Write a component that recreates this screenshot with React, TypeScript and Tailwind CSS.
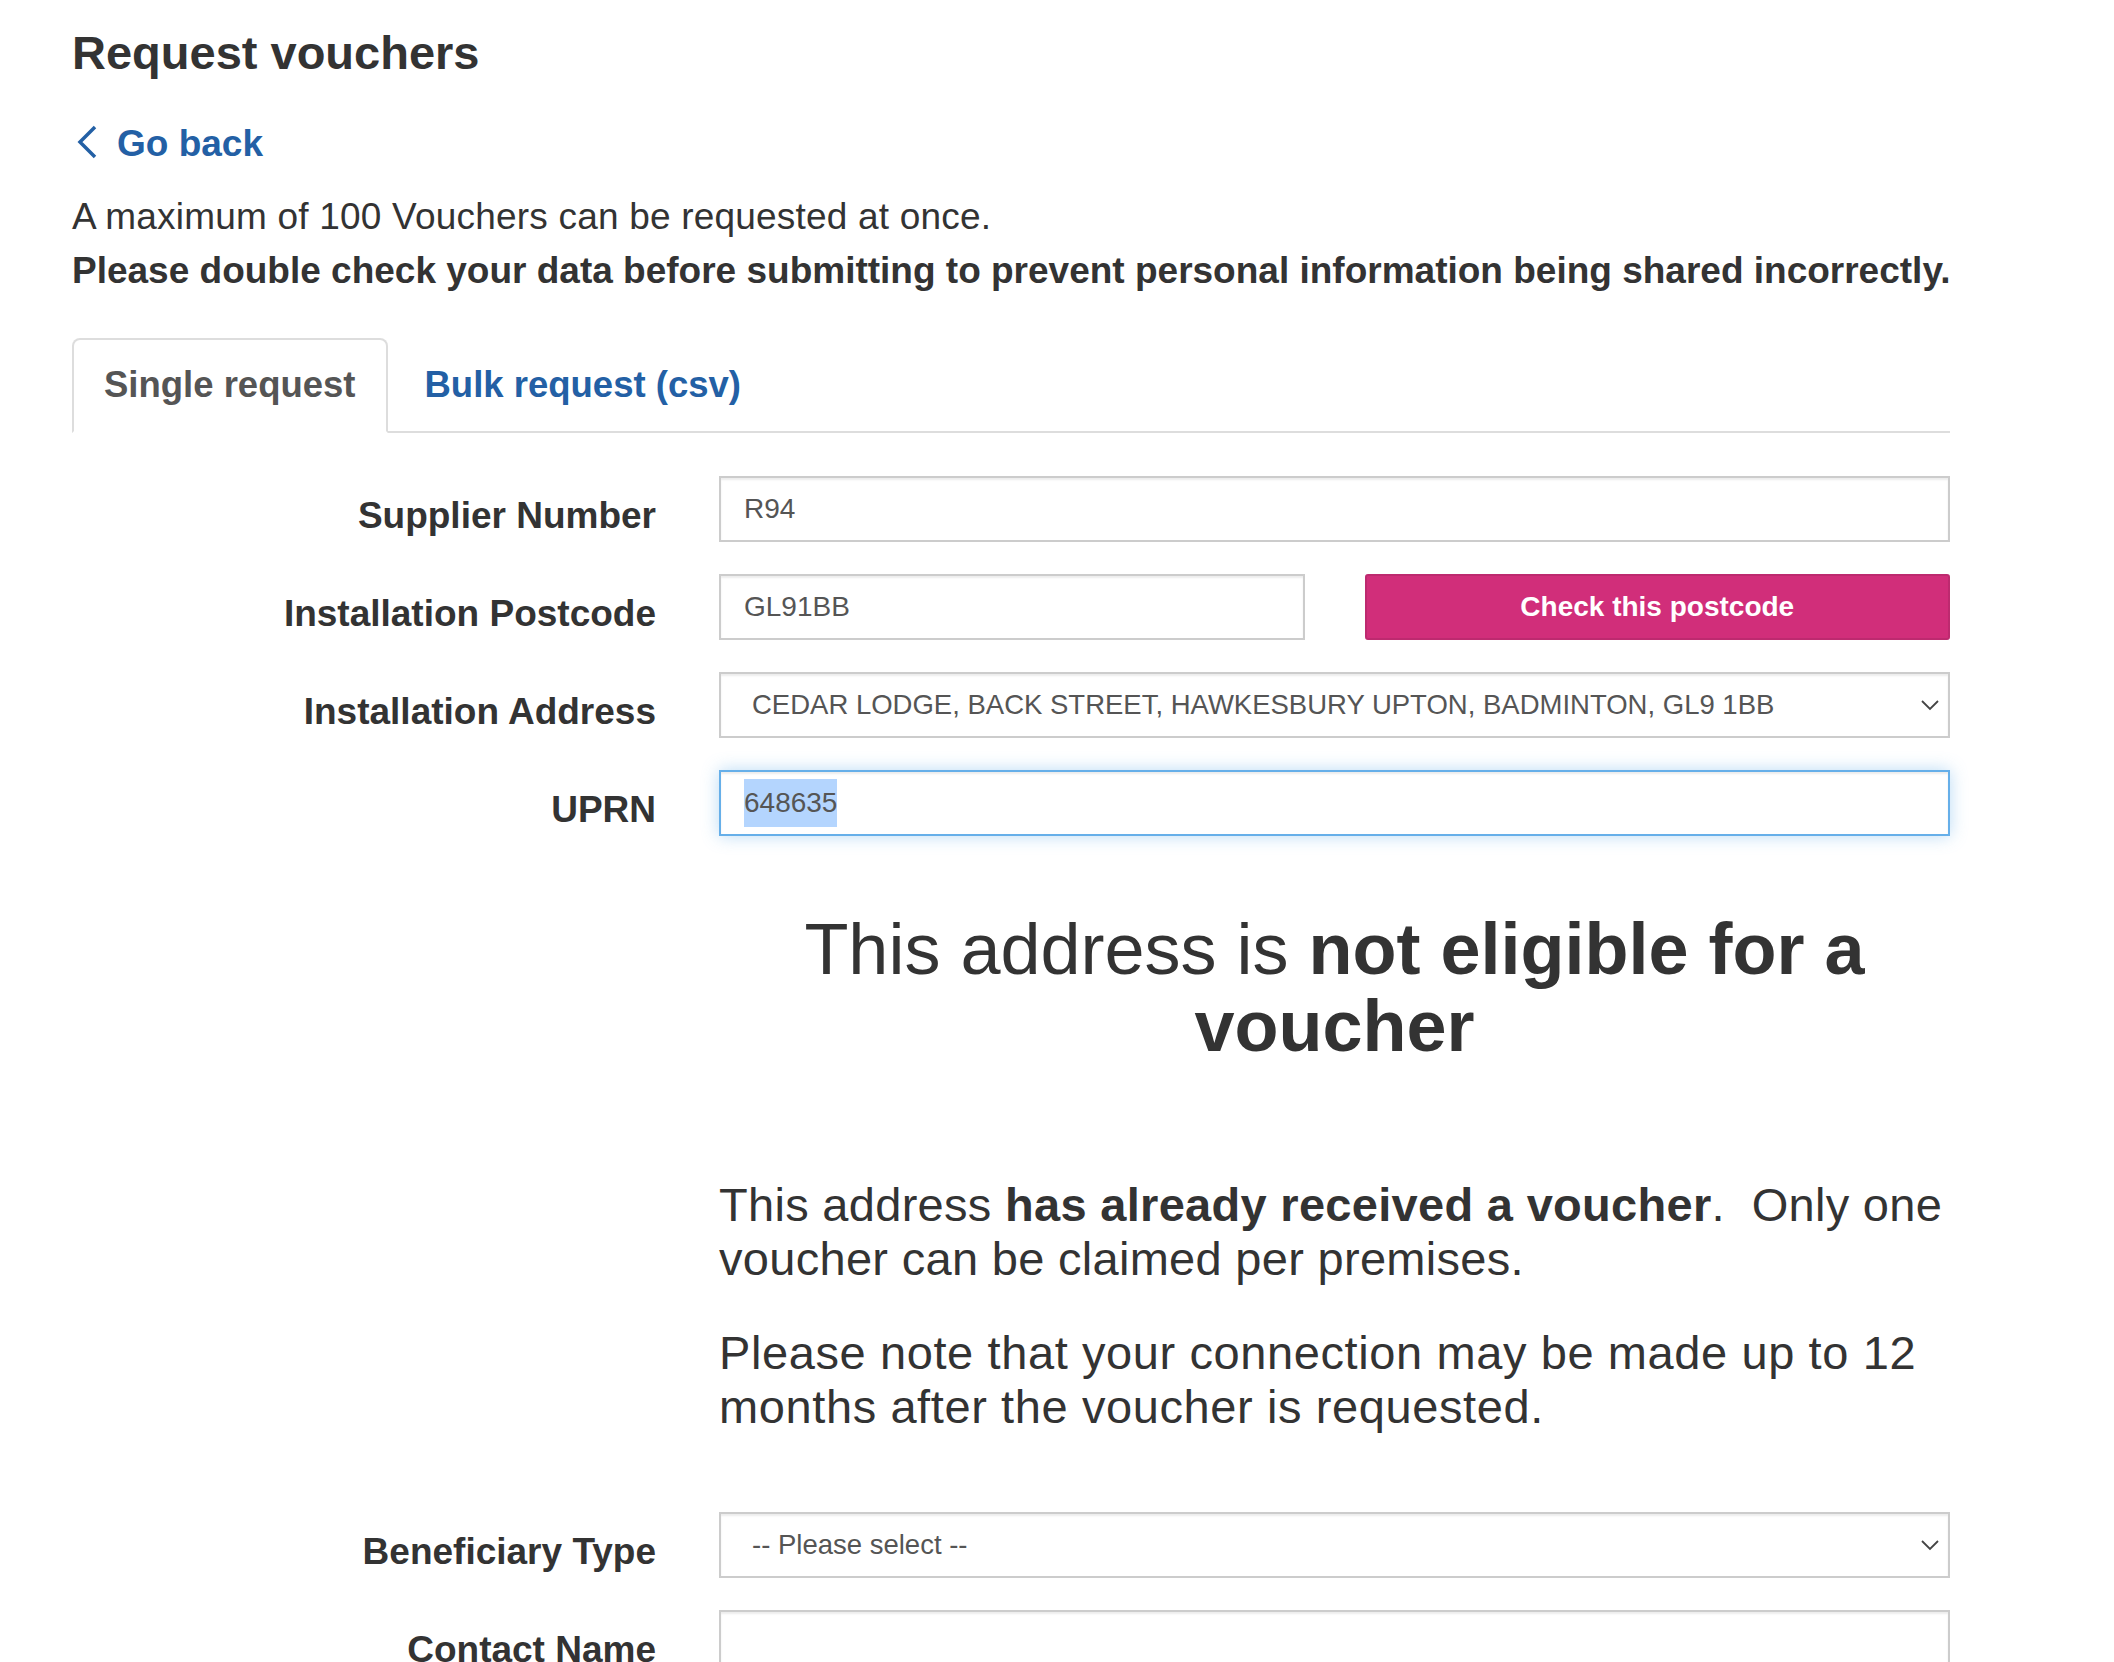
import React from "react";

const font = { fontFamily: '"Liberation Sans", Arial, Helvetica, sans-serif' };

function Label({ children }: { children: React.ReactNode }) {
  return (
    <label className="block pt-[20px] text-right text-[37px] leading-[40px] font-bold text-[#333]">
      {children}
    </label>
  );
}

function TextBox({ value }: { value?: string }) {
  return (
    <div className="flex h-[66px] items-center border-2 border-[#ccc] bg-white pl-[23px] text-[28px] text-[#555] shadow-[inset_0_2px_2px_rgba(0,0,0,0.075)]">
      {value}
    </div>
  );
}

function SelectBox({ value }: { value: string }) {
  return (
    <div className="flex h-[66px] items-center justify-between border-2 border-[#ccc] bg-white pl-[31px] pr-[8px] text-[27.5px] text-[#555] shadow-[inset_0_2px_2px_rgba(0,0,0,0.075)]">
      <span className="truncate">{value}</span>
      <svg width="20" height="12" viewBox="0 0 20 12" className="shrink-0">
        <polyline points="2,2 10,10 18,2" fill="none" stroke="#444" strokeWidth="1.8" />
      </svg>
    </div>
  );
}

export default function App() {
  return (
    <div className="min-h-screen bg-white text-[#333]" style={font}>
      <div className="ml-[72px] w-[1878px] pt-[27px] pb-[80px]">
        <h1 className="text-[47px] leading-[52px] font-bold text-[#333]">Request vouchers</h1>

        <a href="#" className="mt-[45px] flex items-center gap-[22px] text-[37px] leading-[40px] font-bold text-[#2360a5]">
          <svg width="24" height="36" viewBox="0 0 24 36" className="ml-[3px] -mr-[4px] -mt-[4px]">
            <polyline points="20,3 5,18 20,33" fill="none" stroke="#2360a5" strokeWidth="3.5" />
          </svg>
          Go back
        </a>

        <div className="mt-[26px] text-[37px] leading-[54px]">
          <p className="tracking-[0.2px]">A maximum of 100 Vouchers can be requested at once.</p>
          <p className="font-bold whitespace-nowrap">
            Please double check your data before submitting to prevent personal information being shared incorrectly.
          </p>
        </div>

        <ul className="mt-[40px] flex border-b-2 border-[#ddd]">
          <li className="-mb-[2px] mr-[4px]">
            <span className="block rounded-t-[8px] border-2 border-[#ddd] border-b-transparent bg-white px-[30px] pt-[25px] pb-[26px] text-[36.5px] leading-[40px] font-bold text-[#555]">
              Single request
            </span>
          </li>
          <li className="-mb-[2px]">
            <a href="#" className="block rounded-t-[8px] border-2 border-transparent px-[31px] pt-[25px] pb-[26px] text-[36.5px] leading-[40px] font-bold text-[#2360a5]">
              Bulk request (csv)
            </a>
          </li>
        </ul>

        <div className="mt-[43px] grid grid-cols-[584px_1fr] gap-x-[63px] gap-y-[32px]">
          <Label>Supplier Number</Label>
          <TextBox value="R94" />

          <Label>Installation Postcode</Label>
          <div className="grid grid-cols-2 gap-x-[60px]">
            <TextBox value="GL91BB" />
            <button className="h-[66px] rounded-[3px] border-2 border-[#bd2a6f] bg-[#d12e7a] text-[28px] font-bold text-white">
              Check this postcode
            </button>
          </div>

          <Label>Installation Address</Label>
          <SelectBox value="CEDAR LODGE, BACK STREET, HAWKESBURY UPTON, BADMINTON, GL9 1BB" />

          <Label>UPRN</Label>
          <div className="flex h-[66px] items-center border-2 border-[#66afe9] bg-white pl-[23px] text-[28px] text-[#555] shadow-[inset_0_2px_2px_rgba(0,0,0,0.075),0_0_16px_rgba(102,175,233,0.45)]">
            <span className="bg-[#b4d5fe] py-[3px]">648635</span>
          </div>

          <div />
          <div className="pt-[43px]">
            <h2 className="text-center text-[72px] leading-[77px] text-[#333]">
              This address is <strong>not eligible for a voucher</strong>
            </h2>
            <p className="mt-[113px] text-[47px] leading-[54px] tracking-[0.3px]">
              This address <strong>has already received a voucher</strong>.{"\u00a0"} Only one voucher can be claimed per
              premises.
            </p>
            <p className="mt-[40px] mb-[46px] text-[47px] leading-[54px] tracking-[0.6px]">
              Please note that your connection may be made up to 12 months after the voucher is requested.
            </p>
          </div>

          <Label>Beneficiary Type</Label>
          <SelectBox value="-- Please select --" />

          <Label>Contact Name</Label>
          <TextBox />

          <Label>Contact Email</Label>
          <TextBox />
        </div>
      </div>
    </div>
  );
}
